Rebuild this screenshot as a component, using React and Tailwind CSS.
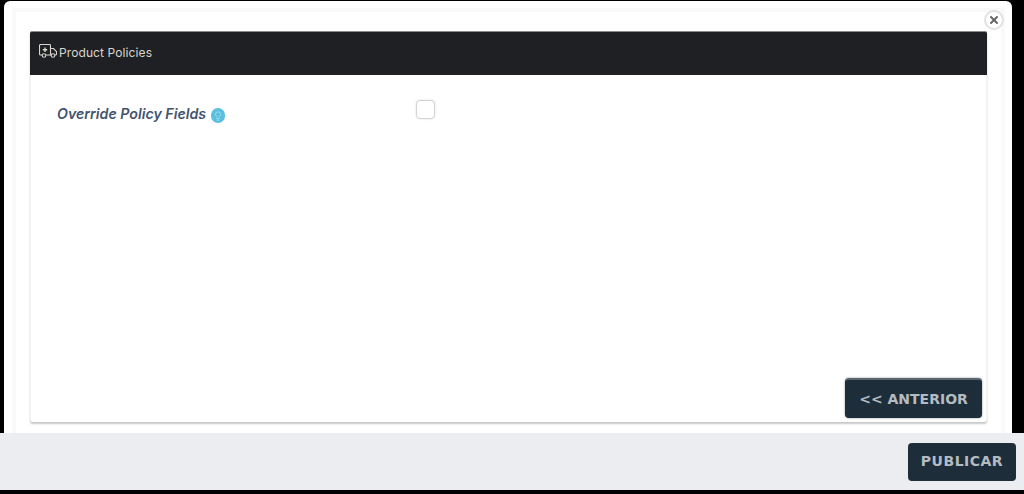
import { Lightbulb, X } from "lucide-react";

function AmbulanceIcon() {
  return (
    <svg width="18" height="14" viewBox="0 0 18 14" fill="none" stroke="currentColor" strokeWidth="1.1" className="-mt-[3px] shrink-0">
      <path d="M3 11H1.5a1 1 0 0 1-1-1V1.5a1 1 0 0 1 1-1h9a1 1 0 0 1 1 1V11H7" />
      <path d="M11.5 4.5h3l3 3V10a1 1 0 0 1-1 1H16M11.5 11h.6" />
      <circle cx="5" cy="11.5" r="1.8" />
      <circle cx="14" cy="11.5" r="1.8" />
      <path d="M6 3.6v4.4M3.8 5.8h4.4" strokeWidth="1.4" />
    </svg>
  );
}

export default function App() {
  return (
    <div className="h-[494px] w-[1024px] overflow-hidden bg-black flex flex-col font-['Inter',sans-serif]">
      {/* Modal */}
      <div className="h-[433px] pl-[4px] pr-[12px] pt-[1px] shrink-0">
        <div className="relative h-full bg-white rounded-t-[6px] pl-[8px] pr-[7px] pt-[7px]">
          <div className="h-full border-t-4 border-x-4 border-[#f9f9f9] pl-[14px] pr-[14px] pt-[19px]">
            {/* Card */}
            <div className="h-[391px] bg-white rounded-[3px] border-x border-[#f2f2f2] shadow-[0_2px_2px_rgba(0,0,0,0.22)] flex flex-col">
              <div className="h-[44px] bg-[#1f2024] rounded-t-[2px] border-t border-[#8a8a8a] flex items-center pl-[9px] pb-[2px] text-[#d8d6cf] -mx-px">
                <AmbulanceIcon />
                <span className="text-[12px] ml-[2px] tracking-[0.1px]">Product Policies</span>
              </div>
              <div className="flex-1 flex flex-col justify-between">
                <div className="flex items-start pl-[26px] pt-[25px]">
                  <div className="w-[359px] flex items-center pt-[5px]">
                    <span className="text-[14.2px] leading-[18px] font-semibold italic text-[#43536e]">
                      Override Policy Fields
                    </span>
                    <span className="ml-[5px] mt-[3px] w-[14px] h-[15px] rounded-full bg-[#5bc0de] flex items-center justify-center text-[#a9e0ef]">
                      <Lightbulb size={10} strokeWidth={2} />
                    </span>
                  </div>
                  <input
                    type="checkbox"
                    className="appearance-none w-[19px] h-[19px] rounded-[4px] border border-[#d4d4d4] bg-white shadow-[0_0_2px_rgba(0,0,0,0.15)]"
                  />
                </div>
                <div className="flex justify-end pr-[4px] pb-[4px]">
                  <button className="w-[137px] h-[40px] rounded-[4px] bg-[#1e2d3a] border-t-2 border-[#5a6670] text-[#b4bcc2] text-[14px] font-bold font-['DejaVu_Sans',sans-serif] shadow-[0_0_2px_rgba(0,0,0,0.5)]">
                    &lt;&lt; ANTERIOR
                  </button>
                </div>
              </div>
            </div>
          </div>
          <button className="absolute right-[8px] top-[9px] w-[20px] h-[20px] rounded-full bg-white border-2 border-[#e2e2e2] flex items-center justify-center text-[#666]">
            <X size={12} strokeWidth={4} />
          </button>
        </div>
      </div>
      {/* Footer */}
      <div className="h-[57px] shrink-0 bg-[#ebedf1] flex items-center justify-end pr-[8px]">
        <button className="w-[108px] h-[38px] rounded-[4px] bg-[#1e2d3a] text-[#b4bcc2] text-[14px] font-bold tracking-[0.5px] font-['DejaVu_Sans',sans-serif]">
          PUBLICAR
        </button>
      </div>
    </div>
  );
}
